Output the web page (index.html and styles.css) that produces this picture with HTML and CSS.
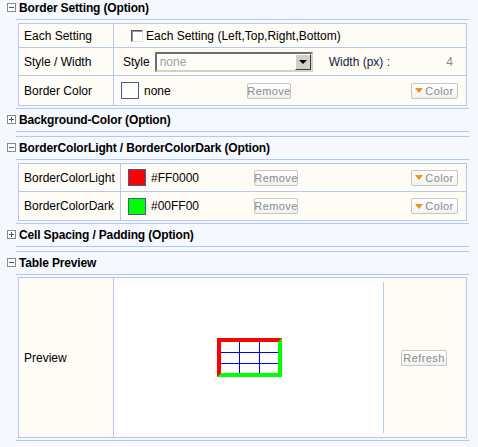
FILE: index.html
```html
<!DOCTYPE html>
<html>
<head>
<meta charset="utf-8">
<link rel="stylesheet" href="styles.css">
</head>
<body>
<div class="wrap">
  <div class="section">
    <div class="hdr first"><span class="tog"><span class="h"></span></span><span class="ttl">Border Setting (Option)</span></div>
    <table class="grid t1">
      <tr class="r1">
        <td class="lbl">Each Setting</td>
        <td class="val"><div class="row"><span class="chk"></span><span>Each Setting (Left,Top,Right,Bottom)</span></div></td>
      </tr>
      <tr class="r2">
        <td class="lbl">Style / Width</td>
        <td class="val"><div class="row">
          <span class="style-lbl">Style</span>
          <div class="select"><span class="sel-text">none</span><span class="arrow"><span class="tri"></span></span></div>
          <span class="width-lbl">Width (px) :</span>
          <span class="num">4</span>
        </div></td>
      </tr>
      <tr class="r3">
        <td class="lbl">Border Color</td>
        <td class="val"><div class="row">
          <span class="cinfo"><span class="sw white"></span><span>none</span></span>
          <span class="btn rm">Remove</span>
          <span class="spacer"></span>
          <span class="btn col"><span class="otri"></span>Color</span>
        </div></td>
      </tr>
    </table>
  </div>

  <div class="section collapsed">
    <div class="hdr"><span class="tog"><span class="h"></span><span class="v"></span></span><span class="ttl">Background-Color (Option)</span></div>
  </div>

  <div class="section">
    <div class="hdr"><span class="tog"><span class="h"></span></span><span class="ttl">BorderColorLight / BorderColorDark (Option)</span></div>
    <table class="grid t3">
      <tr class="a">
        <td class="lbl">BorderColorLight</td>
        <td class="val"><div class="row">
          <span class="cinfo"><span class="sw red"></span><span>#FF0000</span></span>
          <span class="btn rm">Remove</span>
          <span class="spacer"></span>
          <span class="btn col"><span class="otri"></span>Color</span>
        </div></td>
      </tr>
      <tr class="b">
        <td class="lbl">BorderColorDark</td>
        <td class="val"><div class="row">
          <span class="cinfo"><span class="sw green"></span><span>#00FF00</span></span>
          <span class="btn rm">Remove</span>
          <span class="spacer"></span>
          <span class="btn col"><span class="otri"></span>Color</span>
        </div></td>
      </tr>
    </table>
  </div>

  <div class="section collapsed">
    <div class="hdr"><span class="tog"><span class="h"></span><span class="v"></span></span><span class="ttl">Cell Spacing / Padding (Option)</span></div>
  </div>

  <div class="section">
    <div class="hdr tight"><span class="tog"><span class="h"></span></span><span class="ttl">Table Preview</span></div>
    <table class="grid t5">
      <tr>
        <td class="lbl">Preview</td>
        <td class="pv">
          <div class="pv-row">
            <div class="canvas">
              <div class="mini">
                <div class="cells">
                  <span></span><span></span><span></span>
                  <span></span><span></span><span></span>
                  <span></span><span></span><span></span>
                </div>
              </div>
            </div>
            <div class="refresh-area"><span class="btn refresh">Refresh</span></div>
          </div>
        </td>
      </tr>
    </table>
  </div>
</div>
</body>
</html>
```

FILE: styles.css
```css
html, body {
  margin: 0;
  padding: 0;
  background: #f5f8ff;
}
body {
  font-family: "Liberation Sans", Arial, sans-serif;
  font-size: 12px;
  color: #000;
  overflow: hidden;
}
.wrap {
  margin: -3px 0 0 16px;
  width: 453px;
}
.section {
  border-bottom: 1px solid #b4c8f8;
  padding-bottom: 2px;
}
.section.collapsed {
  padding-bottom: 0;
}
.hdr {
  height: 22px;
  border-bottom: 1px solid #b4c8f8;
  display: flex;
  align-items: center;
  margin-bottom: 3px;
}
.hdr.tight { margin-bottom: 2px; }
.section.collapsed .hdr {
  margin-bottom: 4px;
}
.tog {
  position: relative;
  width: 7px;
  height: 7px;
  border: 1px solid #8a8a8a;
  background: #fff;
  margin-left: -9px;
  margin-right: 3px;
  margin-top: -2px;
  flex: none;
}
.tog .h {
  position: absolute;
  left: 1px;
  top: 3px;
  width: 5px;
  height: 1px;
  background: #555;
}
.tog .v {
  position: absolute;
  left: 3px;
  top: 1px;
  width: 1px;
  height: 5px;
  background: #555;
}
.ttl {
  font-weight: bold;
  font-size: 12px;
  letter-spacing: -0.15px;
}
table.grid {
  border-collapse: collapse;
  margin: 0 2px;
  width: 449px;
  background: #fffbf5;
}
table.grid td {
  border: 1px solid #b4c8f8;
  padding: 0;
}
td.lbl {
  padding-left: 5px !important;
  width: 89px;
}
.t3 td.lbl { width: 96px; }
td.val {
  padding: 0 8px 0 7px !important;
}
.t1 .r1 { height: 24px; }
.t1 .r2 { height: 28px; }
.t1 .r3 { height: 30px; }
.t3 .a { height: 28px; }
.t3 .b { height: 29px; }
.row {
  display: flex;
  align-items: center;
}
.chk {
  width: 10px;
  height: 10px;
  border: 1px solid;
  border-color: #555 #ddd #ddd #555;
  box-shadow: inset 1px 1px 0 #999;
  background: #fff;
  margin-left: 10px;
  margin-right: 3px;
}
.style-lbl {
  margin-left: 2px;
  margin-right: 5px;
}
.select {
  width: 154px;
  height: 16px;
  border: 2px solid;
  border-color: #6e6e6e #d4d0c8 #d4d0c8 #6e6e6e;
  background: #fffdf8;
  display: flex;
  align-items: center;
  justify-content: space-between;
}
.sel-text {
  color: #a0a0a0;
  padding-left: 3px;
}
.arrow {
  background: #d4d0c8;
  border: 1px solid;
  border-color: #fff #404040 #404040 #fff;
  box-sizing: border-box;
  width: 16px;
  height: 16px;
  display: flex;
  align-items: center;
  justify-content: center;
}
.tri {
  width: 0;
  height: 0;
  border-left: 4px solid transparent;
  border-right: 4px solid transparent;
  border-top: 4px solid #000;
}
.width-lbl {
  margin-left: 16px;
  color: #1a1a40;
}
.num {
  margin-left: auto;
  width: 60px;
  text-align: right;
  color: #8a8a8a;
  padding-right: 5px;
}
.cinfo {
  width: 126px;
  display: flex;
  align-items: center;
  flex: none;
}
.sw {
  width: 16px;
  height: 15px;
  border: 1px solid #3f5f8f;
  margin-right: 5px;
  flex: none;
}
.sw.white { background: #fff; }
.sw.red { background: #ff0000; }
.sw.green { background: #00ff00; }
.spacer { flex: 1; }
.btn {
  display: inline-flex;
  align-items: center;
  justify-content: center;
  height: 14px;
  border: 1px solid #c6c6c6;
  border-radius: 2px;
  background: linear-gradient(#ffffff, #f2f2f2);
  color: #8c8c8c;
  font-size: 11px;
  letter-spacing: 0.4px;
  box-sizing: content-box;
}
.btn.rm { width: 42px; }
.btn.col { width: 45px; }
.btn.refresh { width: 44px; }
.otri {
  width: 0;
  height: 0;
  border-left: 4px solid transparent;
  border-right: 4px solid transparent;
  border-top: 5px solid #f0901e;
  margin-right: 2px;
}
.t5 td.lbl { width: 89px; }
td.pv {
  padding: 4px 0 4px 1px !important;
}
.pv-row {
  display: flex;
  height: 151px;
}
.canvas {
  width: 268px;
  background: #fff;
  border-right: 1px solid #b4c8f8;
  display: flex;
  align-items: center;
  justify-content: center;
}
.mini {
  border: 4px solid;
  border-color: #ff0000 #00ff00 #00ff00 #ff0000;
  background: #fff;
}
.cells {
  display: grid;
  grid-template-columns: 18px 19px 18px;
  grid-template-rows: 10px 10px 9px;
  gap: 1px;
  background: #0000ff;
}
.cells span { background: #fff; }
.refresh-area {
  flex: 1;
  display: flex;
  align-items: center;
  justify-content: center;
  padding-right: 2px;
}
```
